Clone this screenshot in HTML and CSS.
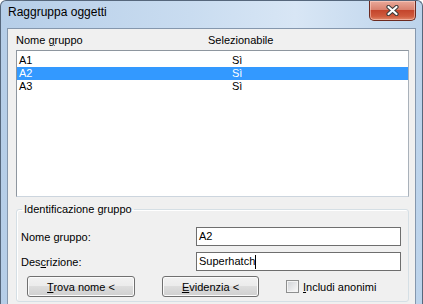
FILE: index.html
```html
<!DOCTYPE html>
<html lang="it">
<head>
    <meta charset="UTF-8">
    <title>Raggruppa oggetti</title>
    <link rel="stylesheet" href="styles.css">
</head>
<body>

    <div class="window">
        <div class="titlebar">
            <span class="title">Raggruppa oggetti</span>
            <div class="close">
                <svg width="13" height="11" viewBox="0 0 13 11">
                    <path d="M2.5 2 L10.5 9 M10.5 2 L2.5 9" stroke="#3a3a3a" stroke-width="4.2" stroke-linecap="round"/>
                    <path d="M2.5 2 L10.5 9 M10.5 2 L2.5 9" stroke="#fff" stroke-width="2.2" stroke-linecap="round"/>
                </svg>
            </div>
        </div>

        <div class="client">
            <!-- Intestazione colonne -->
            <div class="list-head">
                <span class="col-name">Nome <u>g</u>ruppo</span>
                <span class="col-sel">Selezionabile</span>
            </div>

            <div class="listbox">
                <div class="row"><span class="col-name">A1</span><span>Sì</span></div>
                <div class="row selected"><span class="col-name">A2</span><span>Sì</span></div>
                <div class="row"><span class="col-name">A3</span><span>Sì</span></div>
            </div>

            <!-- Identificazione gruppo -->
            <fieldset class="group">
                <legend>Identificazione gruppo</legend>
                <div class="field">
                    <label>Nome <u>g</u>ruppo:</label>
                    <div class="input">A2</div>
                </div>
                <div class="field">
                    <label>Des<u>c</u>rizione:</label>
                    <div class="input">Superhatch<span class="caret"></span></div>
                </div>
                <div class="actions">
                    <button class="btn btn-trova"><u>T</u>rova nome &lt;</button>
                    <button class="btn btn-evid"><u>E</u>videnzia &lt;</button>
                    <label class="check"><span class="box"></span><u>I</u>ncludi anonimi</label>
                </div>
            </fieldset>
        </div>
    </div>

</body>
</html>
```

FILE: styles.css
```css
body {
    margin: 0;
    font-family: "Liberation Sans", Arial, sans-serif;
    font-size: 11px;
    color: #000;
    overflow: hidden;
}

u {
    text-underline-offset: 1px;
}

.window {
    width: 423px;
    height: 304px;
    box-sizing: border-box;
    border: 1px solid #56677c;
    border-bottom: none;
    border-radius: 6px 6px 0 0;
    padding: 0 6px;
    background: linear-gradient(to right, #b6cee8 0%, #c9dcf0 45%, #d8e6f5 70%, #bcd3eb 100%);
    display: flex;
    flex-direction: column;
}

.titlebar {
    height: 27px;
    flex: none;
    display: flex;
    align-items: flex-start;
}

.title {
    font-size: 12px;
    line-height: 15px;
    margin-top: 4px;
    margin-left: 1px;
}

.close {
    margin-left: auto;
    width: 47px;
    height: 20px;
    box-sizing: border-box;
    border: 1px solid #6b2a20;
    border-top: none;
    border-radius: 0 0 5px 5px;
    background: linear-gradient(#e9a99a 0%, #d9826f 45%, #c4452c 50%, #cf5a3d 80%, #e0876a 100%);
    box-shadow: inset 0 0 0 1px rgba(255, 220, 210, 0.5);
    display: flex;
    align-items: center;
    justify-content: center;
}

.client {
    flex: 1;
    border: 1px solid #8597ad;
    border-bottom: none;
    background-color: #f0f0f0;
    padding: 5px 6px 0 8px;
}

.list-head {
    display: flex;
    height: 13px;
    line-height: 13px;
    margin-bottom: 3px;
}

.list-head .col-name {
    width: 192px;
}

.listbox {
    height: 147px;
    box-sizing: border-box;
    border: 1px solid #8e969f;
    border-right-color: #a9b1ba;
    border-bottom-color: #ccd5de;
    background-color: #fff;
    padding-top: 3px;
}

.row {
    display: flex;
    height: 13px;
    line-height: 13px;
    padding-left: 2px;
}

.row .col-name {
    width: 213px;
}

.row.selected {
    background-color: #3399ff;
    color: #fff;
}

.group {
    margin: 6px 0 0 0;
    padding: 11px 7px 4px 4px;
    border: 1px solid #d5dfe5;
    border-radius: 3px;
    box-shadow: inset 1px 1px 0 #fff;
}

.group legend {
    padding: 0 2px;
    margin-left: 1px;
    line-height: 13px;
}

.field {
    display: flex;
    align-items: center;
    height: 19px;
}

.field + .field {
    margin-top: 6px;
}

.field label {
    width: 175px;
}

.input {
    width: 205px;
    height: 19px;
    box-sizing: border-box;
    border: 1px solid #6e6e6e;
    background-color: #fff;
    padding-left: 2px;
    line-height: 17px;
    display: flex;
    align-items: center;
}

.caret {
    display: inline-block;
    width: 1px;
    height: 14px;
    background-color: #000;
}

.actions {
    display: flex;
    align-items: center;
    margin-top: 5px;
}

.btn {
    height: 21px;
    padding: 0;
    border: 1px solid #707070;
    border-radius: 3px;
    background: linear-gradient(#f2f2f2 0%, #ebebeb 50%, #dddddd 50%, #cfcfcf 100%);
    box-shadow: inset 0 0 0 1px #fbfbfb;
    font-family: inherit;
    font-size: 11px;
    color: #000;
}

.btn-trova {
    width: 108px;
    margin-left: 6px;
}

.btn-evid {
    width: 97px;
    margin-left: 27px;
}

.check {
    display: flex;
    align-items: center;
    margin-left: 27px;
}

.box {
    width: 13px;
    height: 13px;
    box-sizing: border-box;
    border: 1px solid #8e8f8f;
    background: linear-gradient(135deg, #cfd2d6 0%, #eeeeef 70%, #fafafa 100%);
    box-shadow: inset 0 0 0 1px #f4f4f4;
    margin-right: 4px;
}
```
